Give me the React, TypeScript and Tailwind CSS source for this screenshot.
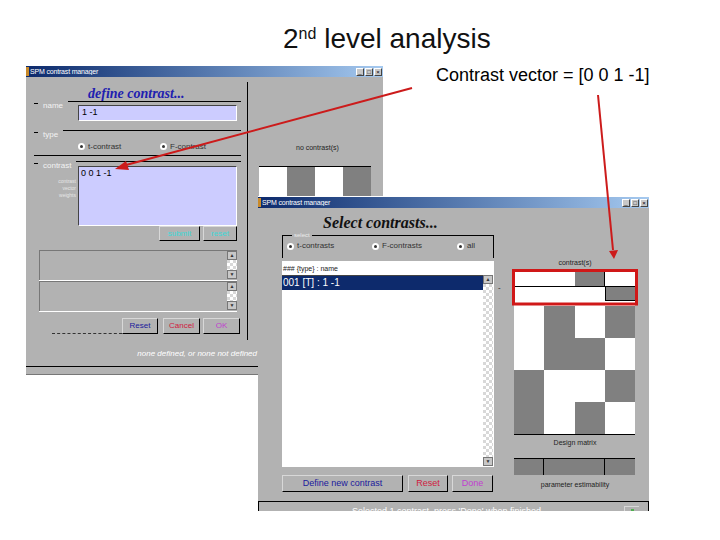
const sans = { fontFamily: '"Liberation Sans", Arial, sans-serif' };

function TitleBar() {
  return (
    <div className="flex h-[11px] items-center bg-gradient-to-r from-[#0d2a6c] to-[#a6caf0] pr-px">
      <span className="mr-px h-[9px] w-[3px] bg-[#c98a2a]" />
      <span className="flex-1 truncate text-[7px] leading-none tracking-tight text-white">SPM contrast manager</span>
      <WinBtn>_</WinBtn>
      <WinBtn>□</WinBtn>
      <WinBtn>×</WinBtn>
    </div>
  );
}

function WinBtn({ children }: { children: string }) {
  return (
    <span className="ml-px flex h-[8px] w-[8px] items-center justify-center border border-t-white border-l-white border-r-[#444] border-b-[#444] bg-[#c8c8c8] text-[6px] leading-none text-black">
      {children}
    </span>
  );
}

function Btn({ label, className }: { label: string; className: string }) {
  return (
    <div className={`flex items-center justify-center border border-t-[#d8d8d8] border-l-[#d8d8d8] border-r-black border-b-black leading-none ${className}`}>
      {label}
    </div>
  );
}

function Radio({ label, className }: { label: string; className: string }) {
  return (
    <div className={`flex items-center gap-[3px] text-[8px] leading-none text-[#333] ${className}`}>
      <span className="flex h-[7px] w-[7px] items-center justify-center rounded-full bg-white">
        <span className="h-[3px] w-[3px] rounded-full bg-[#333]" />
      </span>
      {label}
    </div>
  );
}

function ScrollBar({ className }: { className: string }) {
  return (
    <div className={`flex w-[10px] flex-col justify-between bg-[repeating-conic-gradient(#d8d8d8_0_25%,#ffffff_0_50%)] bg-[length:6px_6px] ${className}`}>
      <span className="flex h-[9px] items-center justify-center border border-[#777] bg-[#c8c8c8] text-[5px] leading-none text-[#333]">▲</span>
      <span className="flex h-[9px] items-center justify-center border border-[#777] bg-[#c8c8c8] text-[5px] leading-none text-[#333]">▼</span>
    </div>
  );
}

function Section({ label, className }: { label: string; className: string }) {
  return (
    <div className={`flex items-start text-[8px] leading-none text-[#f2f2f2] ${className}`}>
      <span className="mt-[2px] h-px w-[4px] bg-black" />
      <span className="mt-[1px] mr-[5px] ml-[5px]">{label}</span>
      <span className="h-px flex-1 bg-black" />
    </div>
  );
}

function DefineWindow() {
  return (
    <div className="absolute top-[66px] left-[26px] flex h-[309px] w-[357px] flex-col border-b border-[#777] bg-[#b2b2b2]" style={sans}>
      <TitleBar />
      <div className="flex h-[290px] border-b border-black">
        <div className="flex h-[263px] w-[221px] flex-col pt-[1px] pl-[8px]">
          <div className="ml-[54px] h-[23px] font-['Liberation_Serif'] text-[14px] leading-[32px] font-bold text-[#2020b0] italic">define contrast...</div>
          <Section label="name" className="h-[10px] pr-[6px]" />
          <div className="mt-[-6px] ml-[44px] flex h-[16px] w-[159px] items-center border border-t-[#444] border-l-[#444] border-r-white border-b-white bg-[#ccccff] pl-[3px] text-[9px] text-black">1 -1</div>
          <Section label="type" className="mt-[9px] h-[10px] pr-[6px]" />
          <div className="mt-[-1px] ml-[44px] flex h-[15px] items-center">
            <Radio label="t-contrast" className="w-[82px]" />
            <Radio label="F-contrast" className="w-[70px]" />
          </div>
          <div className="mt-[1px] mr-[6px] h-px bg-black" />
          <Section label="contrast" className="mt-[5px] h-[5px] pr-[6px]" />
          <div className="ml-[-1px] flex">
            <div className="mt-[12px] w-[45px] pr-[2px] text-right text-[5px] leading-[7px] text-[#e6e6e6]">
              <div>contrast</div>
              <div>vector</div>
              <div>weights</div>
            </div>
            <div className="flex h-[60px] w-[159px] flex-col border border-t-[#444] border-l-[#444] border-r-white border-b-white bg-[#ccccff] pt-[1px] pl-[2px] text-[9px] leading-[11px] text-black">0 0 1 -1</div>
          </div>
          <div className="flex justify-end gap-[3px] pr-[10px]">
            <Btn label="submit" className="h-[15px] w-[41px] text-[8px] text-[#40d8d8]" />
            <Btn label="reset" className="h-[15px] w-[34px] text-[8px] text-[#40d8d8]" />
          </div>
          <div className="mt-[9px] ml-[5px] flex h-[30px] w-[198px] justify-end border-t border-l border-[#777] border-b-white pr-0">
            <ScrollBar className="h-[28px]" />
          </div>
          <div className="ml-[5px] h-px w-[198px] bg-white" />
          <div className="ml-[5px] flex h-[30px] w-[198px] justify-end border-t border-l border-[#777]">
            <ScrollBar className="h-[28px]" />
          </div>
          <div className="ml-[5px] h-px w-[198px] bg-white" />
          <div className="mt-[6px] flex items-end">
            <div className="w-[18px]" />
            <div className="h-0 w-[70px] border-b border-dashed border-[#333]" />
            <Btn label="Reset" className="h-[16px] w-[36px] text-[8px] text-[#1a1a9c]" />
            <Btn label="Cancel" className="ml-[5px] h-[16px] w-[37px] text-[8px] text-[#d02040]" />
            <Btn label="OK" className="ml-[3px] h-[16px] w-[37px] text-[8px] text-[#c040d0]" />
          </div>
        </div>
        <div className="mt-[5px] h-[258px] w-px bg-black" />
        <div className="flex flex-1 flex-col pl-[11px]">
          <div className="mt-[67px] h-[22px] pl-[37px] text-[7px] leading-none text-[#222]">no contrast(s)</div>
          <div className="grid h-[30px] w-[112px] grid-cols-4 border-t border-black">
            <div className="bg-white" />
            <div className="bg-[#808080]" />
            <div className="bg-white" />
            <div className="bg-[#808080]" />
          </div>
        </div>
      </div>
      <div className="flex justify-end pr-[126px]">
        <span className="mt-[-17px] text-[8px] leading-none whitespace-nowrap text-white italic">none defined, or none not defined</span>
      </div>
    </div>
  );
}

const cells = [
  [0, 1, 0, 1],
  [0, 1, 1, 0],
  [1, 0, 0, 1],
  [1, 0, 1, 0],
];

function SelectWindow() {
  return (
    <div className="absolute top-[196px] left-[258px] flex h-[315px] w-[391px] flex-col border-t border-white bg-[#b2b2b2]" style={sans}>
      <TitleBar />
      <div className="flex h-[293px] pl-[24px]">
        <div className="flex w-[212px] flex-col">
          <div className="h-[23px] pt-[6px] pl-[41px] font-['Liberation_Serif'] text-[16px] leading-[18px] font-bold whitespace-nowrap text-[#111] italic">Select contrasts...</div>
          <fieldset className="flex h-[27px] items-center border border-b-0 border-black pt-[3px] pl-[4px]">
            <legend className="ml-[5px] px-[2px] text-[6px] leading-[8px] text-[#ececec]">select</legend>
            <Radio label="t-contrasts" className="w-[85px]" />
            <Radio label="F-contrasts" className="w-[85px]" />
            <Radio label="all" className="" />
          </fieldset>
          <div className="mt-[3px] flex h-[14px] items-center bg-white pl-[1px] text-[7px] leading-none text-[#222]">### {"{type}"} : name</div>
          <div className="flex h-[192px] bg-white">
            <div className="flex-1">
              <div className="flex h-[15px] items-center border-t border-[#444] bg-[#0d2a6c] pl-[1px] text-[10px] leading-none text-white">001 [T] : 1 -1</div>
            </div>
            <ScrollBar className="mr-px h-[191px]" />
          </div>
          <div className="mt-[8px] flex gap-[5px]">
            <Btn label="Define new contrast" className="h-[17px] w-[121px] text-[9px] text-[#1a1a9c]" />
            <Btn label="Reset" className="h-[17px] w-[40px] text-[9px] text-[#d02040]" />
            <Btn label="Done" className="ml-[-1px] h-[17px] w-[41px] text-[9px] text-[#c040d0]" />
          </div>
        </div>
        <div className="flex w-[142px] flex-col pl-[20px]">
          <div className="h-[62px] pt-[51px] text-center text-[7px] leading-none text-[#222]">contrast(s)</div>
          <div className="relative grid h-[36px] w-[121px] grid-cols-4 grid-rows-[17px_19px] bg-white">
            <span className="absolute top-[14px] left-[-16px] text-[8px] leading-none text-[#222]">-</span>
            <div className="col-span-2 border-b border-black" />
            <div className="border-r border-b border-black bg-[#808080]" />
            <div className="border-b border-black" />
            <div className="col-span-3" />
            <div className="mb-[5px] border-b border-l border-black bg-[#808080]" />
          </div>
          <div className="grid h-[129px] w-[121px] grid-cols-4 grid-rows-4 border-b border-black">
            {cells.flat().map((v, i) => (
              <div key={i} className={v ? "bg-[#808080]" : "bg-white"} />
            ))}
          </div>
          <div className="h-[23px] pt-[4px] text-center text-[7px] leading-none text-[#222]">Design matrix</div>
          <div className="flex h-[17px] w-[121px] border-t border-black bg-[#808080]">
            <div className="w-[30px] border-r border-black" />
            <div className="w-[61px] border-r border-black" />
          </div>
          <div className="pt-[6px] text-center text-[7px] leading-none text-[#222]">parameter estimability</div>
        </div>
      </div>
      <div className="flex h-[10px] items-start overflow-hidden border border-b-0 border-black text-[9px] leading-none text-white">
        <span className="flex-1 pt-[5px] pl-[10px] text-center whitespace-nowrap">Selected 1 contrast, press 'Done' when finished</span>
        <span className="mt-[4px] mr-[9px] flex h-[6px] w-[15px] justify-center border-t border-l border-[#d8d8d8] pt-[2px]">
          <span className="h-[3px] w-[3px] bg-[#50b050]" />
        </span>
      </div>
    </div>
  );
}

export default function App() {
  return (
    <div className="relative h-[540px] w-[720px] overflow-hidden bg-white" style={sans}>
      <div className="h-[66px] pt-[23px] pl-[283px]">
        <h1 className="text-[28px] leading-[32px] text-[#111]">
          2<span className="align-[9px] text-[16px] leading-none">nd</span> level analysis
        </h1>
      </div>
      <div className="absolute top-[65px] left-[436px] text-[18px] leading-[20px] text-black">Contrast vector = [0 0 1 -1]</div>
      <DefineWindow />
      <SelectWindow />
      {/* arrows and red highlight on top of the windows */}
      <svg className="pointer-events-none absolute top-0 left-0" width="720" height="540">
        <line x1="412" y1="88" x2="126" y2="165" stroke="#cc1b1b" strokeWidth="2" />
        <polygon points="115,169 126,161 129,170" fill="#cc1b1b" />
        <line x1="598" y1="95" x2="613" y2="250" stroke="#cc1b1b" strokeWidth="2" />
        <polygon points="614,259 609,251 618,250" fill="#cc1b1b" />
        <rect x="513.5" y="270.5" width="123" height="33.5" fill="none" stroke="#d01818" strokeWidth="3" />
      </svg>
    </div>
  );
}
